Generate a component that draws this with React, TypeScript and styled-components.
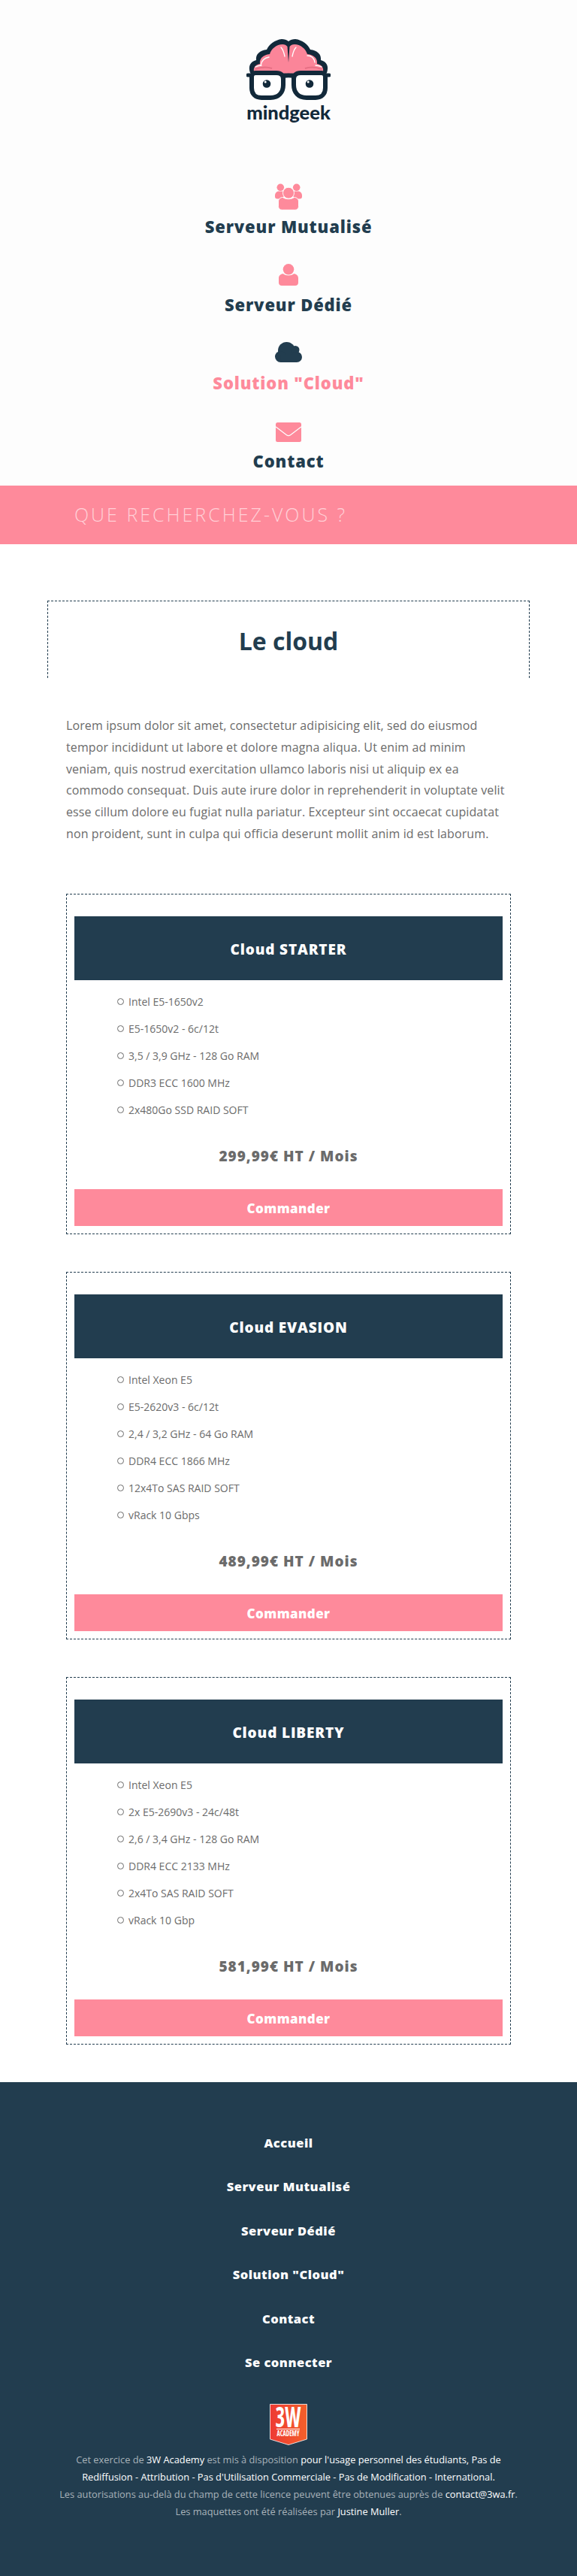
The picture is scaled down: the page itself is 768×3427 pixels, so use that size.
import React from 'react';
import styled, { createGlobalStyle } from 'styled-components';

const NAVY = '#223d4f';
const PINK = '#fe8a9b';
const GREY = '#6b6b6b';
const PAPER = '#fdfdfd';
const INK = '#12293a';

const GlobalStyle = createGlobalStyle`
  html, body {
    margin: 0;
    padding: 0;
    background: #ffffff;
    font-family: 'Open Sans', 'Liberation Sans', sans-serif;
  }
  * { box-sizing: border-box; }
`;

const Page = styled.div`
  width: 768px;
  background: #fff;
`;

// ── Header ───────────────────────────────────────────

const Header = styled.header`
  background: ${PAPER};
  height: 646px;
  padding-top: 50px;
  display: flex;
  flex-direction: column;
  align-items: center;
`;

const LogoBox = styled.div`
  width: 112px;
  display: flex;
  flex-direction: column;
  align-items: center;
`;

const LogoMark = styled.svg`
  display: block;
  width: 112px;
  height: 84px;
`;

const LogoWord = styled.div`
  font-family: 'Lato', 'Open Sans', sans-serif;
  font-weight: 900;
  font-size: 25.5px;
  line-height: 30px;
  color: ${INK};
`;

const NavList = styled.nav`
  margin-top: 76px;
  display: flex;
  flex-direction: column;
  align-items: center;
  gap: 29px;
`;

const NavItem = styled.a<{ $active?: boolean }>`
  display: flex;
  flex-direction: column;
  align-items: center;
  height: 75px;
  color: ${(p) => (p.$active ? PINK : NAVY)};
  font-weight: 800;
  font-size: 22px;
  line-height: 28px;
  letter-spacing: 0.85px;
`;

const NavIcon = styled.svg<{ $tone: string }>`
  display: block;
  width: 40px;
  height: 40px;
  margin-bottom: 7px;
  fill: ${(p) => p.$tone};
`;

const SearchBand = styled.div`
  background: ${PINK};
  height: 78px;
  padding: 0 0 2px 99px;
  display: flex;
  align-items: center;
  font-size: 25px;
  font-weight: 300;
  letter-spacing: 3px;
  color: #ffd0d7;
  text-transform: uppercase;
`;

// ── Main ─────────────────────────────────────────────

const Main = styled.main`
  padding: 75px 0 50px;
`;

const TitleBox = styled.div`
  margin: 0 63px;
  height: 103px;
  border: 1px dashed ${NAVY};
  border-bottom: none;
  padding-top: 31px;
  text-align: center;
`;

const Title = styled.h1`
  margin: 0;
  font-size: 32px;
  line-height: 44px;
  font-weight: 700;
  color: ${NAVY};
`;

const Lead = styled.p`
  margin: 49px 88px 0;
  font-size: 16px;
  line-height: 28.8px;
  letter-spacing: 0.11px;
  color: ${GREY};
  white-space: pre-line;
`;

const Offers = styled.div`
  margin: 65px 88px 0;
  display: flex;
  flex-direction: column;
  gap: 50px;
`;

const Offer = styled.section`
  border: 1px dashed ${NAVY};
  padding: 29px 10px 10px;
`;

const OfferHead = styled.h2`
  margin: 0;
  height: 85px;
  padding-top: 3px;
  background: ${NAVY};
  color: #fff;
  display: flex;
  align-items: center;
  justify-content: center;
  font-weight: 800;
  font-size: 19px;
  letter-spacing: 0.85px;
`;

const Specs = styled.ul`
  margin: 11px 0 0;
  padding: 0 0 0 57px;
  list-style: none;
`;

const Spec = styled.li`
  display: flex;
  align-items: center;
  height: 36px;
  font-size: 14px;
  color: ${GREY};

  &::before {
    content: '';
    width: 7px;
    height: 7px;
    border: 1px solid ${GREY};
    border-radius: 50%;
    margin-right: 6px;
  }
`;

const Price = styled.div`
  margin-top: 29px;
  text-align: center;
  font-weight: 800;
  font-size: 19px;
  line-height: 28px;
  letter-spacing: 1px;
  color: ${GREY};
`;

const OrderButton = styled.a`
  margin-top: 30px;
  height: 49px;
  padding-top: 3px;
  background: ${PINK};
  color: #fff;
  display: flex;
  align-items: center;
  justify-content: center;
  font-weight: 800;
  font-size: 17px;
  letter-spacing: 0.4px;
`;

// ── Footer ───────────────────────────────────────────

const Footer = styled.footer`
  background: ${NAVY};
  height: 657px;
  padding-top: 69px;
  display: flex;
  flex-direction: column;
  align-items: center;
`;

const FooterLink = styled.a`
  height: 58.5px;
  color: #fff;
  font-weight: 800;
  font-size: 16.5px;
  line-height: 24px;
  letter-spacing: 0.5px;
`;

const Badge = styled.svg`
  display: block;
  width: 50px;
  height: 55px;
  margin-top: 8px;
`;

const BadgeText = styled.text`
  fill: #fff;
  font-family: 'Open Sans', sans-serif;
  font-stretch: condensed;
  font-weight: 700;
`;

const Legal = styled.p`
  margin: 8px 0 0;
  width: 680px;
  text-align: center;
  font-size: 12.8px;
  line-height: 23px;
  color: #a9b3ba;
  white-space: pre-line;

  b {
    font-weight: 400;
    color: #fff;
  }
`;

// ── Icons ────────────────────────────────────────────

const GroupIcon = () => (
  <NavIcon $tone={PINK} viewBox="0 0 40 40">
    <circle cx="9.300" cy="9.300" r="4.800" />
    <circle cx="30.700" cy="9.300" r="4.800" />
    <path d="M2 20c0-3 2-5.500 5-5.500h5c3 0 4 3 3 6l-6 4H5c-2 0-3-1-3-3z" />
    <path d="M38 20c0-3-2-5.500-5-5.500h-5c-3 0-4 3-3 6l6 4h4c2 0 3-1 3-3z" />
    <circle cx="20" cy="16.700" r="7.500" stroke={PAPER} strokeWidth="1" />
    <path
      d="M6.500 28c0-3 2.500-5.500 6-5.500 2 1.500 4.500 2.200 7.500 2.200s5.500-.7 7.500-2.200c3.500 0 6 2.500 6 5.500v6.500c0 2.800-2 4.800-4.800 4.800H11.300c-2.800 0-4.800-2-4.800-4.800z"
      stroke={PAPER}
      strokeWidth="1"
    />
  </NavIcon>
);

const UserIcon = () => (
  <NavIcon $tone={PINK} viewBox="0 0 40 40">
    <circle cx="20" cy="14.300" r="7.300" />
    <path d="M7 26c0-3 2.500-5.700 6-5.700 2 1.500 4.300 2.200 7 2.200s5-.7 7-2.200c3.500 0 6 2.700 6 5.700v6c0 2.400-1.700 4-4 4H11c-2.300 0-4-1.600-4-4z" />
  </NavIcon>
);

const CloudIcon = () => (
  <NavIcon $tone={NAVY} viewBox="0 0 40 40">
    <circle cx="17.500" cy="18.500" r="11.500" />
    <circle cx="29" cy="17.500" r="5.500" />
    <circle cx="9.500" cy="26.500" r="7.500" />
    <circle cx="31" cy="27" r="7" />
    <path d="M9.500 24h21.500v10H9.500z" />
  </NavIcon>
);

const MailIcon = () => (
  <NavIcon $tone={PINK} viewBox="0 0 40 40">
    <rect x="3" y="10" width="34" height="26" rx="2.500" />
    <path d="M3 15.700l14.500 11c1.500 1.100 3.500 1.100 5 0L37 15.700" fill="none" stroke={PAPER} strokeWidth="1.300" />
  </NavIcon>
);

const BrandMark = () => (
  <LogoMark viewBox="0 0 112 84">
    <path
      d="M5 47C2 38 5 32 13 30 12 22 18 17 27 16 30 9 38 3 47 2 50 2 54 3 56 5 58 3 62 2 65 2 74 3 82 9 85 16 94 17 100 22 99 30 107 32 110 38 107 47Z"
      fill={INK}
    />
    <path
      d="M10 45C9 40 12 36 18 35 17 28 22 23 31 22 33 15 40 9 48 9 51 9 53 10 54.500 12L56 33 57.500 12C59 10 61 9 64 9 72 9 79 15 81 22 90 23 95 28 94 35 100 36 103 40 102 45L70 46 56 49 42 46Z"
      fill="#fb8599"
    />
    <path d="M12 42c8-3 16-3 22-1M100 42c-8-3-16-3-22-1" fill="none" stroke="#e66f84" strokeWidth="2" />
    <path d="M19 37c1-6 5-10 11-11M46 13c3 3 4 7 5 12M66 13c-3 3-4 7-5 12" fill="none" stroke="#fff" strokeWidth="1.300" strokeLinecap="round" />
    <path d="M81 24c5 0 9 3 10 9M12 39c2-1 5-2 8-2M92 37c3 0 6 1 8 2" fill="none" stroke="#fff" strokeWidth="1.300" strokeLinecap="round" />
    <path d="M2 50h108" stroke={INK} strokeWidth="5" strokeLinecap="round" />
    <path
      d="M7 52c0-3 2-5 5-5h28c6 0 9 3 9 8v8c0 10-6 17-17 17H20C12 80 7 75 7 67z"
      fill="#fff"
      stroke={INK}
      strokeWidth="6"
    />
    <path
      d="M105 52c0-3-2-5-5-5H72c-6 0-9 3-9 8v8c0 10 6 17 17 17h12c8 0 13-5 13-13z"
      fill="#fff"
      stroke={INK}
      strokeWidth="6"
    />
    <path d="M48 52c5-2 11-2 16 0" fill="none" stroke={INK} strokeWidth="5.500" />
    <circle cx="27" cy="61.500" r="5.300" fill={INK} />
    <circle cx="84" cy="61.500" r="5.300" fill={INK} />
    <circle cx="25.200" cy="59" r="1.500" fill="#fff" />
    <circle cx="82.200" cy="59" r="1.500" fill="#fff" />
  </LogoMark>
);

const AcademyBadge = () => (
  <Badge viewBox="0 0 50 55">
    <defs>
      <linearGradient id="badgeFill" x1="0" x2="1" y1="0" y2="0">
        <stop offset="0" stopColor="#ee3a33" />
        <stop offset="1" stopColor="#f4602a" />
      </linearGradient>
    </defs>
    <path d="M.5.500h49v46.500L25 54.500.5 47z" fill="url(#badgeFill)" stroke="#fff" strokeWidth="0.800" />
    <BadgeText transform="translate(24.500 31) scale(0.72 1)" textAnchor="middle" fontSize="38">
      3W
    </BadgeText>
    <rect x="9" y="33" width="31" height="1" fill="#fff" />
    <BadgeText transform="translate(24.500 43) scale(0.8 1)" textAnchor="middle" fontSize="10">
      ACADEMY
    </BadgeText>
  </Badge>
);

// ── Data ─────────────────────────────────────────────

const OFFERS = [
  {
    name: 'Cloud STARTER',
    price: '299,99€ HT / Mois',
    specs: ['Intel E5-1650v2', 'E5-1650v2 - 6c/12t', '3,5 / 3,9 GHz - 128 Go RAM', 'DDR3 ECC 1600 MHz', '2x480Go SSD RAID SOFT'],
  },
  {
    name: 'Cloud EVASION',
    price: '489,99€ HT / Mois',
    specs: ['Intel Xeon E5', 'E5-2620v3 - 6c/12t', '2,4 / 3,2 GHz - 64 Go RAM', 'DDR4 ECC 1866 MHz', '12x4To SAS RAID SOFT', 'vRack 10 Gbps'],
  },
  {
    name: 'Cloud LIBERTY',
    price: '581,99€ HT / Mois',
    specs: ['Intel Xeon E5', '2x E5-2690v3 - 24c/48t', '2,6 / 3,4 GHz - 128 Go RAM', 'DDR4 ECC 2133 MHz', '2x4To SAS RAID SOFT', 'vRack 10 Gbp'],
  },
];

const FOOTER_LINKS = ['Accueil', 'Serveur Mutualisé', 'Serveur Dédié', 'Solution "Cloud"', 'Contact', 'Se connecter'];

const LOREM = `Lorem ipsum dolor sit amet, consectetur adipisicing elit, sed do eiusmod
tempor incididunt ut labore et dolore magna aliqua. Ut enim ad minim
veniam, quis nostrud exercitation ullamco laboris nisi ut aliquip ex ea
commodo consequat. Duis aute irure dolor in reprehenderit in voluptate velit
esse cillum dolore eu fugiat nulla pariatur. Excepteur sint occaecat cupidatat
non proident, sunt in culpa qui officia deserunt mollit anim id est laborum.`;

export default function App() {
  return (
    <Page>
      <GlobalStyle />
      <Header>
        <LogoBox>
          <BrandMark />
          <LogoWord>mindgeek</LogoWord>
        </LogoBox>
        <NavList>
          <NavItem>
            <GroupIcon />
            Serveur Mutualisé
          </NavItem>
          <NavItem>
            <UserIcon />
            Serveur Dédié
          </NavItem>
          <NavItem $active>
            <CloudIcon />
            Solution "Cloud"
          </NavItem>
          <NavItem>
            <MailIcon />
            Contact
          </NavItem>
        </NavList>
      </Header>

      <SearchBand>Que recherchez-vous ?</SearchBand>

      <Main>
        <TitleBox>
          <Title>Le cloud</Title>
        </TitleBox>
        <Lead>{LOREM}</Lead>
        <Offers>
          {OFFERS.map((offer) => (
            <Offer key={offer.name}>
              <OfferHead>{offer.name}</OfferHead>
              <Specs>
                {offer.specs.map((spec) => (
                  <Spec key={spec}>{spec}</Spec>
                ))}
              </Specs>
              <Price>{offer.price}</Price>
              <OrderButton>Commander</OrderButton>
            </Offer>
          ))}
        </Offers>
      </Main>

      <Footer>
        {FOOTER_LINKS.map((label) => (
          <FooterLink key={label}>{label}</FooterLink>
        ))}
        <AcademyBadge />
        <Legal>
          Cet exercice de <b>3W Academy</b> est mis à disposition <b>pour l'usage personnel des étudiants, Pas de{'\n'}Rediffusion - Attribution - Pas d'Utilisation Commerciale - Pas de Modification - International.</b>
          {'\n'}Les autorisations au-delà du champ de cette licence peuvent être obtenues auprès de <b>contact@3wa.fr</b>.
          {'\n'}Les maquettes ont été réalisées par <b>Justine Muller</b>.
        </Legal>
      </Footer>
    </Page>
  );
}
